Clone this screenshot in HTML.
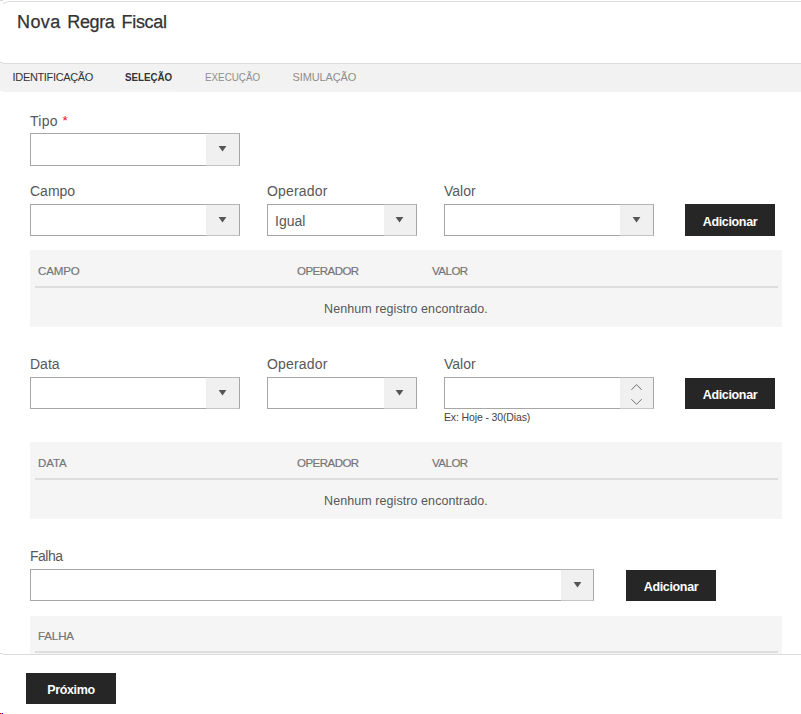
<!DOCTYPE html>
<html><head><meta charset="utf-8">
<style>
*{box-sizing:border-box;margin:0;padding:0}
html,body{width:801px;height:714px;overflow:hidden;background:#fff;font-family:"Liberation Sans",sans-serif;color:#585858}
.abs{position:absolute}
.title{left:17px;top:10px;font-size:18px;color:#333;line-height:24px;white-space:nowrap;letter-spacing:.12px;-webkit-text-stroke:.25px #333}
.tab{top:71px;font-size:11px;line-height:13px;white-space:nowrap;color:#333}
.tab.dis{color:#8e8e8e}
.lbl{font-size:14px;line-height:16px;white-space:nowrap;color:#585858}
.sel{height:32px;border:1px solid #a6a6a6;background:#fff}
.sel .btn{position:absolute;right:-1px;top:-1px;bottom:-1px;width:34px;background:#f0f0f0;border:1px solid #a6a6a6;border-left:0;border-top-color:#b4b4b4;border-bottom-color:#c4c4c4}
.sel .btn svg{position:absolute;left:12px;top:12px}
.sel .txt{position:absolute;left:7px;top:8px;font-size:14px;line-height:16px;color:#585858}
.add{width:90px;height:32px;background:#262626;color:#fff;font-size:12.5px;font-weight:bold;text-align:center;line-height:16px;padding-top:10px;letter-spacing:-.35px}
.grid{left:30px;width:752px;background:#f5f5f5}
.gh{font-size:11.5px;line-height:14px;color:#757575;white-space:nowrap;-webkit-text-stroke:.2px #757575}
.gline{left:5px;width:743px;height:2px;background:#dedede}
.empty{left:0;width:752px;text-align:center;font-size:12.5px;line-height:16px;color:#585858;letter-spacing:.07px}
</style></head><body>
<svg class="abs" style="left:0;top:0" width="801" height="6"><rect x="0" y="0" width="3" height="1" fill="#d8d8d8"/><path d="M3 3.6 L8 1.5" stroke="#e4e4e0" stroke-width="1.2" fill="none"/><rect x="8" y="1" width="793" height="1" fill="#dcdcdc"/></svg>
<div class="abs title" style="letter-spacing:.4px">Nova</div><div class="abs title" style="left:67.3px;letter-spacing:-.37px">Regra</div><div class="abs title" style="left:121.6px;letter-spacing:-.33px">Fiscal</div>
<div class="abs" style="left:0;top:62px;width:3px;height:29px;background:#f2f2f2;border-top:1px solid #dcdcdc"></div>
<div class="abs" style="left:3px;top:63px;width:798px;height:29px;background:#f2f2f2;border-top:1px solid #dcdcdc"></div>
<div class="abs" style="left:121px;top:90px;width:56px;height:2px;background:#f6f6f6"></div>
<div class="abs tab" style="left:12.6px;letter-spacing:-.35px">IDENTIFICAÇÃO</div>
<div class="abs tab" style="left:125.4px;font-weight:bold;transform-origin:0 0;transform:scaleX(.885)">SELEÇÃO</div>
<div class="abs tab dis" style="left:204.8px;transform-origin:0 0;transform:scaleX(.893)">EXECUÇÃO</div>
<div class="abs tab dis" style="left:292.5px;letter-spacing:-.12px">SIMULAÇÃO</div>

<div class="abs lbl" style="left:30px;top:113px;letter-spacing:.25px">Tipo</div>
<div class="abs" style="left:62.5px;top:113px;font-size:13.5px;line-height:16px;color:#e0103c">*</div>
<div class="abs sel" style="left:30px;top:133px;width:210px;height:33px"><div class="btn"><svg width="9" height="6"><path d="M.6 0H8.4L4.5 5.4z" fill="#555"/></svg></div></div>

<div class="abs lbl" style="left:30px;top:183px">Campo</div>
<div class="abs lbl" style="left:267px;top:183px;letter-spacing:.18px">Operador</div>
<div class="abs lbl" style="left:444px;top:183px">Valor</div>
<div class="abs sel" style="left:30px;top:204px;width:210px"><div class="btn"><svg width="9" height="6"><path d="M.6 0H8.4L4.5 5.4z" fill="#555"/></svg></div></div>
<div class="abs sel" style="left:267px;top:204px;width:150px"><div class="txt">Igual</div><div class="btn" style="width:33px"><svg style="left:11px" width="9" height="6"><path d="M.6 0H8.4L4.5 5.4z" fill="#555"/></svg></div></div>
<div class="abs sel" style="left:444px;top:204px;width:210px"><div class="btn"><svg width="9" height="6"><path d="M.6 0H8.4L4.5 5.4z" fill="#555"/></svg></div></div>
<div class="abs add" style="left:685px;top:204px">Adicionar</div>

<div class="abs grid" style="top:250px;height:77px">
  <div class="abs gh" style="left:8px;top:14px;letter-spacing:-.1px">CAMPO</div>
  <div class="abs gh" style="left:267px;top:14px;letter-spacing:-.52px">OPERADOR</div>
  <div class="abs gh" style="left:402px;top:14px;letter-spacing:-.5px">VALOR</div>
  <div class="abs gline" style="top:36px"></div>
  <div class="abs empty" style="top:51px">Nenhum registro encontrado.</div>
</div>

<div class="abs lbl" style="left:30px;top:356px">Data</div>
<div class="abs lbl" style="left:267px;top:356px;letter-spacing:.18px">Operador</div>
<div class="abs lbl" style="left:444px;top:356px">Valor</div>
<div class="abs sel" style="left:30px;top:377px;width:210px"><div class="btn"><svg width="9" height="6"><path d="M.6 0H8.4L4.5 5.4z" fill="#555"/></svg></div></div>
<div class="abs sel" style="left:267px;top:377px;width:150px"><div class="btn" style="width:33px"><svg style="left:11px" width="9" height="6"><path d="M.6 0H8.4L4.5 5.4z" fill="#555"/></svg></div></div>
<div class="abs sel" style="left:444px;top:377px;width:210px"><div class="btn"><svg style="left:0;top:0" width="33" height="32"><path d="M11.4 11.9L16.5 6.6L21.7 11.9M11.4 21.2L16.5 26.4L21.7 21.2" stroke="#707070" stroke-width="1" fill="none"/></svg></div></div>
<div class="abs add" style="left:685px;top:378px;height:31px;padding-top:9px">Adicionar</div>
<div class="abs" style="left:444px;top:411px;font-size:10.5px;line-height:12px;color:#444;letter-spacing:-.13px;white-space:nowrap">Ex: Hoje - 30(Dias)</div>

<div class="abs grid" style="top:442px;height:77px">
  <div class="abs gh" style="left:8px;top:14px;letter-spacing:-.1px">DATA</div>
  <div class="abs gh" style="left:267px;top:14px;letter-spacing:-.52px">OPERADOR</div>
  <div class="abs gh" style="left:402px;top:14px;letter-spacing:-.5px">VALOR</div>
  <div class="abs gline" style="top:36px"></div>
  <div class="abs empty" style="top:51px">Nenhum registro encontrado.</div>
</div>

<div class="abs lbl" style="left:30px;top:548px;letter-spacing:-.5px">Falha</div>
<div class="abs sel" style="left:30px;top:569px;width:564px"><div class="btn" style="width:33px"><svg style="left:11.5px" width="9" height="6"><path d="M.6 0H8.4L4.5 5.4z" fill="#555"/></svg></div></div>
<div class="abs add" style="left:626px;top:570px;height:31px;padding-top:9px">Adicionar</div>
<div class="abs grid" style="top:616px;height:40px">
  <div class="abs gh" style="left:8px;top:13px;letter-spacing:-.1px">FALHA</div>
  <div class="abs gline" style="top:35px"></div>
</div>
<div class="abs" style="left:0;top:654px;width:801px;height:60px;background:#fff"></div>
<div class="abs" style="left:0;top:653px;width:3px;height:1px;background:#dcdcdc"></div>
<div class="abs" style="left:3px;top:654px;width:798px;height:1px;background:#dcdcdc"></div>
<div class="abs add" style="left:26px;top:673px;height:31px;padding-top:9px">Próximo</div>
<div class="abs" style="left:0;top:713px;width:1px;height:1px;background:#f00"></div><div class="abs" style="left:1px;top:713px;width:1px;height:1px;background:#0f0"></div><div class="abs" style="left:2px;top:713px;width:1px;height:1px;background:#00f"></div>
</body></html>
